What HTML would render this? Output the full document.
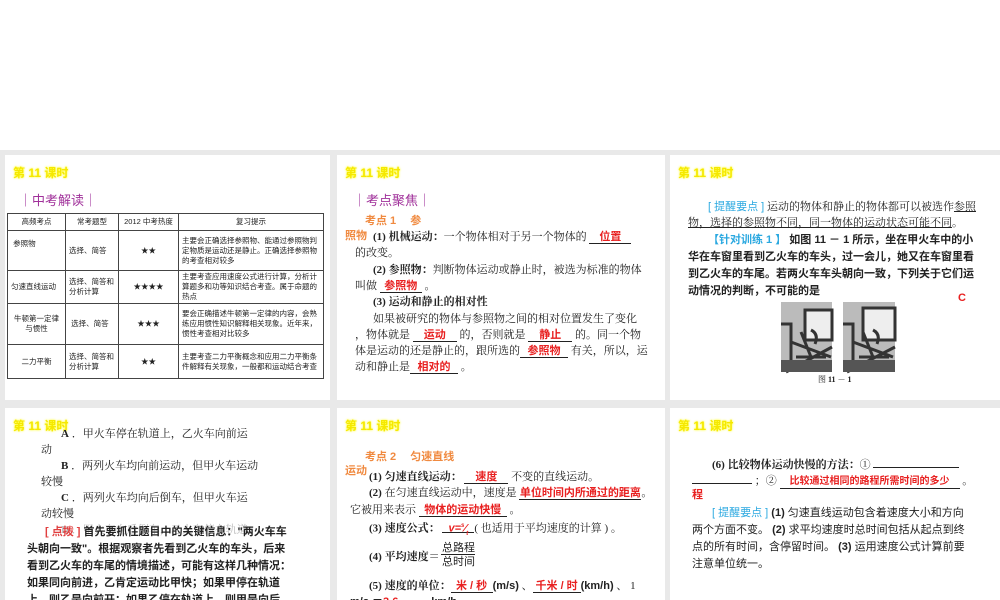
<!DOCTYPE html>
<html><head><meta charset="utf-8"><style>
*{margin:0;padding:0;box-sizing:border-box}
body{width:1000px;height:600px;overflow:hidden;background:#fff;position:relative;font-family:"Liberation Serif","Noto Serif CJK SC",serif;color:#222}
.bg{position:absolute;left:0;top:150px;width:1000px;height:450px;background:#e9e9e9}
.s{position:absolute;background:#fff;overflow:hidden}
.t{position:absolute;left:8px;top:9px;font:bold 12px "Liberation Sans","Noto Sans CJK SC",sans-serif;color:#f5e800;text-shadow:0 0 2px #ff0}
.a{position:absolute;white-space:nowrap;font-size:11px;line-height:13px}
.sans{font-family:"Liberation Sans","Noto Sans CJK SC",sans-serif}
.h{font-family:"Liberation Sans","Noto Sans CJK SC",sans-serif;color:#a0309a;font-size:13px;line-height:16px}
.r{color:#e82020;font-family:"Liberation Sans","Noto Sans CJK SC",sans-serif;font-weight:bold}
.o{color:#f08a40;font-family:"Liberation Sans","Noto Sans CJK SC",sans-serif;font-weight:bold;font-size:11px}
.u{display:inline-block;border-bottom:1px solid #222;text-align:center;height:12px;line-height:10px;vertical-align:baseline}
.b{font-weight:bold}
.c{color:#2aa8e0;font-family:"Liberation Sans","Noto Sans CJK SC",sans-serif}
table{position:absolute;left:2px;top:58px;border-collapse:collapse;font-size:7.5px;font-family:"Liberation Sans","Noto Sans CJK SC",sans-serif}
td{border:1px solid #444;padding:1px 3px;line-height:10px}
</style></head><body>
<div class="bg"></div>

<div class="s" style="left:5px;top:155px;width:325px;height:245px">
<div class="t">第 11 课时</div>
<div class="a h" style="left:14px;top:38px">｜中考解读｜</div>
<table>
<tr style="height:17px"><td style="width:58px;text-align:center">高频考点</td><td style="width:53px;text-align:center">常考题型</td><td style="width:60px;text-align:center">2012 中考热度</td><td style="width:145px;text-align:center">复习提示</td></tr>
<tr style="height:40px"><td style="vertical-align:top;padding-top:8px">&nbsp;参照物</td><td>选择、简答</td><td style="text-align:center">★★</td><td>主要会正确选择参照物、能通过参照物判定物质是运动还是静止。正确选择参照物的考查相对较多</td></tr>
<tr style="height:31px"><td>匀速直线运动</td><td>选择、简答和分析计算</td><td style="text-align:center">★★★★</td><td>主要考查应用速度公式进行计算，分析计算题多和功等知识结合考查。属于命题的热点</td></tr>
<tr style="height:41px"><td style="text-align:center">牛顿第一定律与惯性</td><td>&nbsp;选择、简答</td><td style="text-align:center">★★★</td><td>要会正确描述牛顿第一定律的内容，会熟练应用惯性知识解释相关现象。近年来，惯性考查相对比较多</td></tr>
<tr style="height:34px"><td style="text-align:center">二力平衡</td><td>选择、简答和分析计算</td><td style="text-align:center">★★</td><td>主要考查二力平衡概念和应用二力平衡条件解释有关现象，一般都和运动结合考查</td></tr>
</table>
</div>

<div class="s" style="left:337px;top:155px;width:328px;height:245px">
<div class="t">第 11 课时</div>
<div class="a h" style="left:16px;top:38px">｜考点聚焦｜</div>
<div class="a o" style="left:28px;top:60px">考点 1　 参</div>
<div class="a o" style="left:8px;top:75px">照物</div>
<div class="a" style="left:36px;top:76px"><b>(1) 机械运动：</b>一个物体相对于另一个物体的 <span class="u r" style="width:42px">位置</span></div>
<div class="a" style="left:18px;top:92px">的改变。</div>
<div class="a" style="left:36px;top:109px"><b>(2) 参照物：</b>判断物体运动或静止时，被选为标准的物体</div>
<div class="a" style="left:18px;top:125px">叫做 <span class="u r" style="width:42px">参照物</span> 。</div>
<div class="a b" style="left:36px;top:141px">(3) 运动和静止的相对性</div>
<div class="a" style="left:36px;top:158px">如果被研究的物体与参照物之间的相对位置发生了变化</div>
<div class="a" style="left:18px;top:174px">，物体就是 <span class="u r" style="width:44px">运动</span> 的，否则就是 <span class="u r" style="width:44px">静止</span> 的。同一个物</div>
<div class="a" style="left:18px;top:190px">体是运动的还是静止的，跟所选的<span class="u r" style="width:48px">参照物</span> 有关，所以，运</div>
<div class="a" style="left:18px;top:206px">动和静止是<span class="u r" style="width:48px">相对的</span> 。</div>
</div>

<div class="s" style="left:670px;top:155px;width:330px;height:245px">
<div class="t">第 11 课时</div>
<div class="a" style="left:38px;top:46px"><span class="c">[ 提醒要点 ]</span> 运动的物体和静止的物体都可以被选作<u>参照</u></div>
<div class="a" style="left:18px;top:62px"><u>物，选择的参照物不同，同一物体的运动状态可能不同</u>。</div>
<div class="a sans b" style="left:38px;top:79px"><span class="c">【针对训练 1 】</span> 如图 11 － 1 所示，坐在甲火车中的小</div>
<div class="a sans b" style="left:18px;top:96px">华在车窗里看到乙火车的车头，过一会儿，她又在车窗里看</div>
<div class="a sans b" style="left:18px;top:113px">到乙火车的车尾。若两火车车头朝向一致，下列关于它们运</div>
<div class="a sans b" style="left:18px;top:130px">动情况的判断，不可能的是</div>
<div class="a r" style="left:288px;top:137px;font-size:11px">C</div>
<svg style="position:absolute;left:111px;top:147px" width="116" height="72">
<rect x="0" y="0" width="51" height="70" fill="#bbb"/><rect x="62" y="0" width="52" height="70" fill="#bbb"/>
<rect x="24" y="8" width="27" height="30" fill="#eee"/><rect x="82" y="6" width="32" height="32" fill="#eee"/>
<path d="M0 22h10v45M24 8h27v30H24zM5 70L51 45M10 40l40 15M15 55h30M20 30l10 25M30 28q8 4 4 14" stroke="#333" stroke-width="3" fill="none"/>
<path d="M62 22h10v45M82 6h32v32H82zM66 70l48-25M72 40l40 15M78 55h30M82 30l10 25M92 28q8 4 4 14" stroke="#333" stroke-width="3" fill="none"/>
<rect x="0" y="58" width="51" height="12" fill="#555"/><rect x="62" y="58" width="52" height="12" fill="#555"/>
</svg>
<div class="a" style="left:148px;top:218px;font-size:8px">图 <b>11 － 1</b></div>
</div>

<div class="s" style="left:5px;top:408px;width:325px;height:192px">
<div class="t">第 11 课时</div>
<div class="a" style="left:56px;top:20px"><b>A</b> ．甲火车停在轨道上，乙火车向前运</div>
<div class="a" style="left:36px;top:36px">动</div>
<div class="a" style="left:56px;top:52px"><b>B</b> ．两列火车均向前运动，但甲火车运动</div>
<div class="a" style="left:36px;top:68px">较慢</div>
<div class="a" style="left:56px;top:84px"><b>C</b> ．两列火车均向后倒车，但甲火车运</div>
<div class="a" style="left:36px;top:100px">动较慢</div>
<div class="a" style="left:56px;top:116px;color:#bbb"><b>D</b> ．甲火车向后倒车，乙火车停在轨道</div>
<div class="a sans b" style="left:40px;top:118px"><span style="color:#e04040">[ 点拨 ]</span> 首先要抓住题目中的关键信息："两火车车</div>
<div class="a sans b" style="left:22px;top:135px">头朝向一致"。根据观察者先看到乙火车的车头，后来</div>
<div class="a sans b" style="left:22px;top:152px">看到乙火车的车尾的情境描述，可能有这样几种情况：</div>
<div class="a sans b" style="left:22px;top:169px">如果同向前进，乙肯定运动比甲快；如果甲停在轨道</div>
<div class="a sans b" style="left:22px;top:186px">上，则乙是向前开；如果乙停在轨道上，则甲是向后</div>
</div>

<div class="s" style="left:337px;top:408px;width:328px;height:192px">
<div class="t">第 11 课时</div>
<div class="a o" style="left:28px;top:43px">考点 2　 匀速直线</div>
<div class="a o" style="left:8px;top:57px">运动</div>
<div class="a" style="left:32px;top:63px"><b>(1) 匀速直线运动：</b> <span class="u r" style="width:44px">速度</span> 不变的直线运动。</div>
<div class="a" style="left:32px;top:79px"><b>(2)</b> 在匀速直线运动中，速度是 <span class="u r" style="width:122px">单位时间内所通过的距离</span>。</div>
<div class="a" style="left:13px;top:96px">它被用来表示 <span class="u r" style="width:88px">物体的运动快慢</span> 。</div>
<div class="a" style="left:32px;top:113px"><b>(3) 速度公式：</b> <span class="u r" style="width:32px;font-style:italic">v=<sup style="font-size:6px">s</sup>⁄<sub style="font-size:6px">t</sub></span>( 也适用于平均速度的计算 ) 。</div>
<div class="a" style="left:32px;top:143px"><b>(4) 平均速度＝</b></div>
<div class="a sans" style="left:105px;top:133px;font-size:11px;line-height:14px">总路程<br>总时间</div>
<div style="position:absolute;left:104px;top:146px;width:34px;border-top:1px solid #222"></div>
<div class="a" style="left:32px;top:172px"><b>(5) 速度的单位：</b><span class="u r" style="width:42px">米 / 秒</span><b class="sans">(m/s)</b> 、<span class="u r" style="width:48px">千米 / 时</span><b class="sans">(km/h)</b> 、 1</div>
<div class="a sans b" style="left:13px;top:188px">m/s ＝<span class="r">3.6</span>　　　km/h 。</div>
</div>

<div class="s" style="left:670px;top:408px;width:330px;height:192px">
<div class="t">第 11 课时</div>
<div class="a" style="left:42px;top:48px"><b>(6) 比较物体运动快慢的方法：</b>① <span class="u" style="width:86px"></span></div>
<div class="a" style="left:22px;top:64px"><span class="u" style="width:60px"></span> ；② <span class="u r" style="width:180px;font-size:10px">比较通过相同的路程所需时间的多少</span> 。</div>
<div class="a r" style="left:22px;top:81px;font-size:11px">程</div>
<div class="a sans" style="left:42px;top:99px"><span class="c">[ 提醒要点 ]</span> <b>(1)</b> 匀速直线运动包含着速度大小和方向</div>
<div class="a sans" style="left:22px;top:116px">两个方面不变。 <b>(2)</b> 求平均速度时总时间包括从起点到终</div>
<div class="a sans" style="left:22px;top:133px">点的所有时间，含停留时间。 <b>(3)</b> 运用速度公式计算前要</div>
<div class="a sans" style="left:22px;top:150px">注意单位统一。</div>
</div>
</body></html>
